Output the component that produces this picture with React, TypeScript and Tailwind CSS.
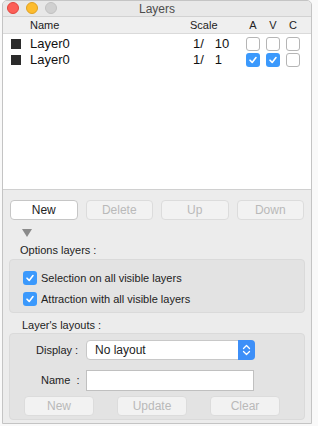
import React from 'react';

const font = { fontFamily: '"Liberation Sans", Arial, sans-serif' };

function Check({ on }: { on?: boolean }) {
  if (on) {
    return (
      <span className="flex h-[14px] w-[14px] shrink-0 items-center justify-center rounded-[3px] bg-[#3b99fc]">
        <svg width="10" height="10" viewBox="0 0 10 10">
          <path d="M2 5.2 L4.2 7.4 L8 2.6" fill="none" stroke="white" strokeWidth="1.6" strokeLinecap="round" strokeLinejoin="round" />
        </svg>
      </span>
    );
  }
  return <span className="block h-[14px] w-[14px] shrink-0 rounded-[3px] border border-[#b5b5b5] bg-white" />;
}

function Btn({ label, enabled, w }: { label: string; enabled?: boolean; w: string }) {
  return (
    <div
      className={`${w} flex h-[20px] items-center justify-center rounded-[4px] border text-[12px] ${
        enabled ? 'border-[#c6c6c6] bg-white text-[#222]' : 'border-[#dcdcdc] bg-[#f2f2f2] text-[#b9b9b9]'
      }`}
    >
      {label}
    </div>
  );
}

export default function App() {
  const rows = [
    { scale: '10', a: false, v: false },
    { scale: '1', a: true, v: true },
  ];
  return (
    <div className="h-[426px] w-[318px] bg-[#f9f9f9]" style={font}>
      <div className="ml-[2px] flex h-[424px] w-[310px] flex-col overflow-hidden rounded-t-[5px] border border-[#c4c4c4] bg-[#ececec] *:shrink-0">
        {/* title bar */}
        <div className="relative flex h-[16px] items-center justify-center border-b border-[#d2d2d2] bg-[#e8e8e8]">
          <div className="absolute left-[4px] top-[1px] flex gap-[7px]">
            <span className="h-[12px] w-[12px] rounded-full border border-[#e0443e] bg-[#fc5f57]" />
            <span className="h-[12px] w-[12px] rounded-full border border-[#dea123] bg-[#fdbc2e]" />
            <span className="h-[12px] w-[12px] rounded-full border border-[#c1c1c1] bg-[#d0d0d0]" />
          </div>
          <span className="text-[12px] text-[#4d4d4d]">Layers</span>
        </div>

        {/* list */}
        <div className="flex h-[173px] flex-col border-b border-[#d0d0d0] bg-white">
          <div className="flex h-[17px] items-center border-b border-[#dadada] bg-[#efefef] text-[11px] text-[#222]">
            <span className="ml-[27px] w-[160px]">Name</span>
            <span className="w-[53px]">Scale</span>
            <span className="w-[20px] text-center">A</span>
            <span className="w-[20px] text-center">V</span>
            <span className="w-[20px] text-center">C</span>
          </div>
          <div className="flex flex-col pt-[2px]">
            {rows.map((r, i) => (
              <div key={i} className="flex h-[16px] items-center text-[13px] text-[#111]">
                <span className="ml-[8px] h-[10px] w-[10px] bg-[#2b2b2b]" />
                <span className="ml-[9px] w-[163px]">Layer0</span>
                <span className="w-[50px] whitespace-pre">{'1/   ' + r.scale}</span>
                <span className="flex w-[20px] justify-center"><Check on={r.a} /></span>
                <span className="flex w-[20px] justify-center"><Check on={r.v} /></span>
                <span className="flex w-[20px] justify-center"><Check /></span>
              </div>
            ))}
          </div>
        </div>

        {/* buttons */}
        <div className="mt-[10px] flex gap-[8px] px-[7px]">
          <Btn label="New" enabled w="w-[69px]" />
          <Btn label="Delete" w="w-[69px]" />
          <Btn label="Up" w="w-[69px]" />
          <Btn label="Down" w="w-[69px]" />
        </div>

        <div className="ml-[19px] mt-[9px] h-[8px]">
          <svg width="10" height="8" viewBox="0 0 10 8" className="block">
            <path d="M0 0 H10 L5 8 Z" fill="#8a8a8a" />
          </svg>
        </div>

        <div className="ml-[17px] mt-[7px] h-[13px] text-[11px] leading-[13px] text-[#222]">Options layers :</div>
        <div className="mx-[6px] mt-[2px] flex flex-col gap-[7px] rounded-[4px] border border-[#dadada] bg-[#e3e3e3] px-[13px] pb-[6px] pt-[11px] text-[11px] text-[#222]">
          <div className="flex h-[14px] items-center gap-[4px]"><Check on /> Selection on all visible layers</div>
          <div className="flex h-[14px] items-center gap-[4px]"><Check on /> Attraction with all visible layers</div>
        </div>

        <div className="ml-[19px] mt-[6px] h-[13px] text-[11px] leading-[13px] text-[#222]">Layer's layouts :</div>
        <div className="mx-[6px] mt-[1px] flex flex-col rounded-[4px] border border-[#dadada] bg-[#e3e3e3] px-[14px] pb-[3px] pt-[6px] text-[11px] text-[#222]">
          <div className="flex h-[20px] items-center">
            <span className="ml-[12px] w-[50px]">Display :</span>
            <div className="flex h-[20px] w-[169px] items-center justify-between rounded-[4px] border border-[#c8c8c8] bg-white">
              <span className="ml-[8px] text-[12px]">No layout</span>
              <span className="-mr-px flex h-[20px] w-[17px] items-center justify-center rounded-r-[4px] bg-[#3d8ff8]">
                <svg width="9" height="12" viewBox="0 0 9 12">
                  <path d="M1.5 4.5 L4.5 1.5 L7.5 4.5 M1.5 7.5 L4.5 10.5 L7.5 7.5" fill="none" stroke="white" strokeWidth="1.3" strokeLinecap="round" strokeLinejoin="round" />
                </svg>
              </span>
            </div>
          </div>
          <div className="mt-[10px] flex h-[20px] items-center">
            <span className="ml-[17px] w-[45px] whitespace-pre">{'Name  :'}</span>
            <div className="h-[21px] w-[168px] border border-[#c0c0c0] bg-white" />
          </div>
          <div className="mt-[6px] flex gap-[23px]">
            <Btn label="New" w="w-[70px]" />
            <Btn label="Update" w="w-[70px]" />
            <Btn label="Clear" w="w-[70px]" />
          </div>
        </div>
      </div>
    </div>
  );
}
